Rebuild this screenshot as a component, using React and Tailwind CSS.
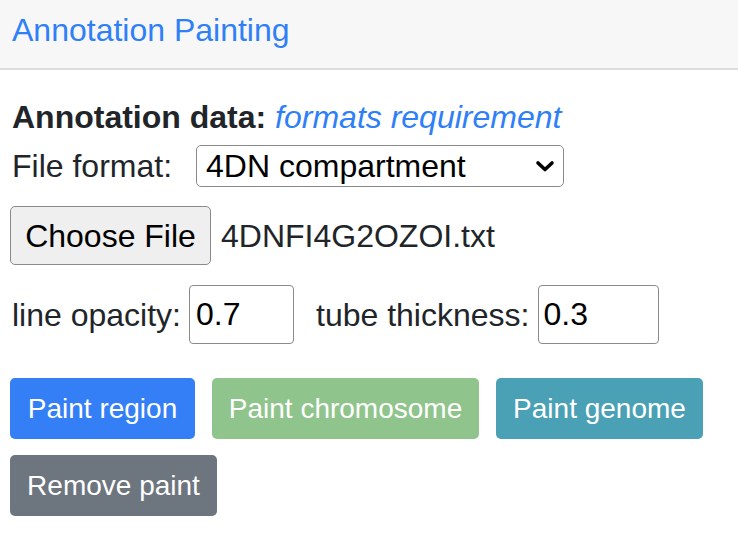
import { useState } from 'react'

const FONT = { fontFamily: '"Liberation Sans", Arial, sans-serif' }

export default function App() {
  const [format, setFormat] = useState('4DN compartment')
  const [opacity, setOpacity] = useState('0.7')
  const [thickness, setThickness] = useState('0.3')

  return (
    <div className="w-[738px] h-[544px] bg-white text-[#212529] overflow-hidden" style={FONT}>
      {/* header */}
      <div className="h-[70px] bg-[#f7f7f7] border-b-2 border-[#dcdcdc] pl-[12px] pt-[12px]">
        <h1 className="text-[32px] leading-[37px] text-[#2f7ff7]">Annotation Painting</h1>
      </div>

      <div className="pl-[10px] pt-[29px]">
        <div className="text-[32px] leading-[37px] pl-[2px]">
          <span className="font-bold">Annotation data: </span>
          <a className="italic text-[#2f7ff7] cursor-pointer">formats requirement</a>
        </div>

        <div className="mt-[9px] h-[42px] flex items-center text-[32px] pl-[2px]">
          <span className="leading-[42px]">File format:</span>
          <div className="relative ml-[24px] w-[368px] h-[42px]">
            <select
              value={format}
              onChange={(e) => setFormat(e.target.value)}
              className="appearance-none block w-full h-[42px] border border-[#8a8a8a] rounded-[5px] bg-white pl-[9px] text-[32px] leading-[40px] text-black"
              style={FONT}
            >
              <option>4DN compartment</option>
              <option>bedGraph</option>
              <option>bigWig</option>
            </select>
            <svg
              className="absolute right-[8px] top-[14px] pointer-events-none"
              width="22"
              height="14"
              viewBox="0 0 22 14"
            >
              <path d="M4 4 L11 10.5 L18 4" fill="none" stroke="#000" strokeWidth="3.6" strokeLinecap="round" strokeLinejoin="round" />
            </svg>
          </div>
        </div>

        <div className="mt-[19px] h-[59px] flex items-center text-[32px]">
          <button
            className="h-[59px] w-[201px] bg-[#efefef] border border-[#8a8a8a] rounded-[5px] text-black text-[32px]"
            style={FONT}
          >
            Choose File
          </button>
          <span className="ml-[10px]">4DNFI4G2OZOI.txt</span>
        </div>

        <div className="mt-[20px] h-[59px] flex items-center text-[32px] pl-[2px]">
          <span>line opacity:</span>
          <input
            value={opacity}
            onChange={(e) => setOpacity(e.target.value)}
            className="ml-[8px] w-[105px] h-[59px] border border-[#8a8a8a] rounded-[4px] px-[6px] text-[32px] text-black"
            style={FONT}
          />
          <span className="ml-[22px]">tube thickness:</span>
          <input
            value={thickness}
            onChange={(e) => setThickness(e.target.value)}
            className="ml-[9px] w-[121px] h-[59px] border border-[#8a8a8a] rounded-[4px] px-[4px] text-[32px] text-black"
            style={FONT}
          />
        </div>

        <div className="mt-[34px] flex flex-wrap gap-x-[17px] gap-y-[16px] w-[720px]">
          <button className="h-[61px] w-[185px] rounded-[5px] bg-[#357ff6] text-white text-[28px]" style={FONT}>
            Paint region
          </button>
          <button className="h-[61px] w-[267px] rounded-[5px] bg-[#8fc48c] text-white text-[28px]" style={FONT}>
            Paint chromosome
          </button>
          <button className="h-[61px] w-[207px] rounded-[5px] bg-[#4aa1b5] text-white text-[28px]" style={FONT}>
            Paint genome
          </button>
          <button className="h-[61px] w-[207px] rounded-[5px] bg-[#6d757e] text-white text-[28px]" style={FONT}>
            Remove paint
          </button>
        </div>
      </div>
    </div>
  )
}
